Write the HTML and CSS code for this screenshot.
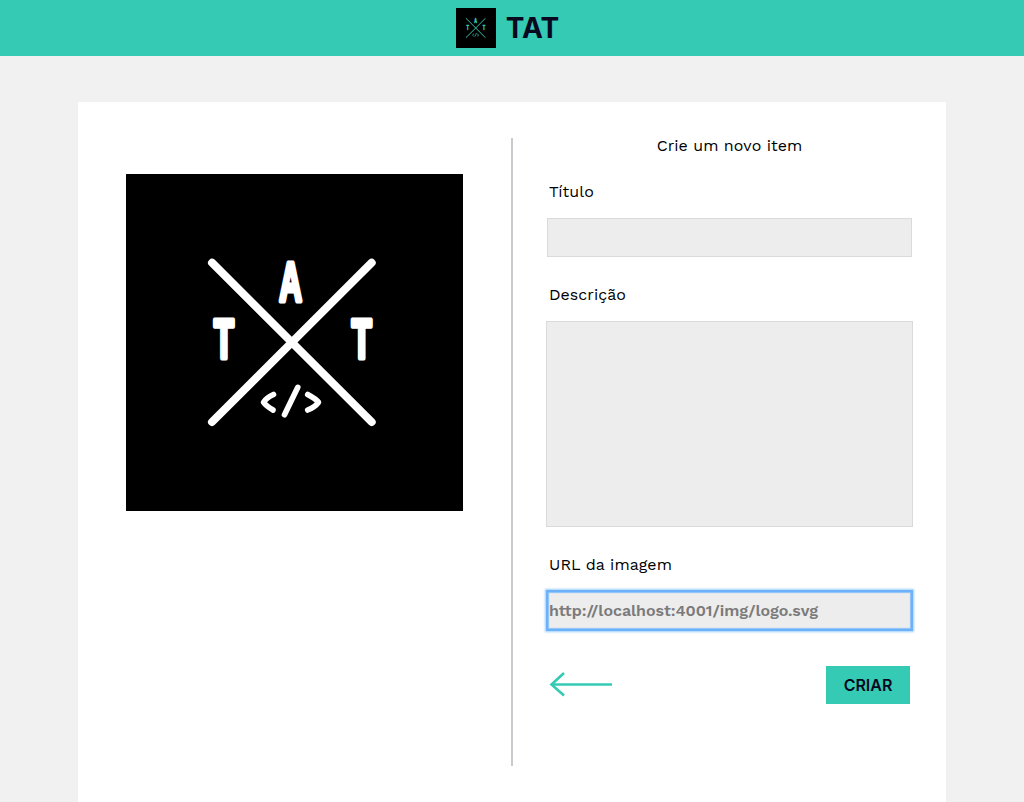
FILE: index.html
```
<!DOCTYPE html>
<html lang="pt">
<head>
<meta charset="utf-8">
<title>TAT</title>
<link rel="stylesheet" href="styles.css">
</head>
<body>
<header class="topbar">
  <svg class="logo topbar-logo" viewBox="0 0 337 337">
    <path class="logo-cross" d="M86 88.7 245.7 248M245.7 88.7 86 248"/>
    <path class="logo-code" d="M147.5 220.5Q140 224 137.5 228.3 140 232 147 236M181.7 220.5Q190 225 192.5 228.3 189 233 181.7 236M171.8 213.3 158.5 240.8"/>
    <g class="logo-letters">
      <text transform="translate(164.5 127.3) scale(.57 1)">A</text>
      <text transform="translate(97.8 184) scale(.59 1)">T</text>
      <text transform="translate(235.6 184) scale(.59 1)">T</text>
    </g>
  </svg>
  <span class="brand">TAT</span>
</header>
<main class="card">
  <section class="preview">
    <svg class="logo preview-image" viewBox="0 0 337 337">
      <path class="logo-cross" d="M86 88.7 245.7 248M245.7 88.7 86 248"/>
      <path class="logo-code" d="M147.5 220.5Q140 224 137.5 228.3 140 232 147 236M181.7 220.5Q190 225 192.5 228.3 189 233 181.7 236M171.8 213.3 158.5 240.8"/>
      <g class="logo-letters">
        <text transform="translate(164.5 127.3) scale(.57 1)">A</text>
        <text transform="translate(97.8 184) scale(.59 1)">T</text>
        <text transform="translate(235.6 184) scale(.59 1)">T</text>
      </g>
    </svg>
  </section>
  <form class="form">
    <h1 class="title">Crie um novo item</h1>
    <label class="label" for="titulo">Título</label>
    <input class="field" id="titulo" type="text">
    <label class="label" for="descricao">Descrição</label>
    <textarea class="field area" id="descricao"></textarea>
    <label class="label" for="url">URL da imagem</label>
    <input class="field focused" id="url" type="text" placeholder="http://localhost:4001/img/logo.svg">
    <div class="actions">
      <svg class="back" viewBox="0 0 64 26"><path d="M16 2 3.5 13.5 16 24.5"/><path d="M3.5 13.5H64"/></svg>
      <button class="create" type="button">CRIAR</button>
    </div>
  </form>
</main>
</body>
</html>
```
FILE: styles.css
```
* { box-sizing: border-box; }
body {
  margin: 0;
  height: 802px;
  background: #f1f1f1;
  color: #000;
  font: 400 16px/20px "Work Sans", Inter, sans-serif;
}
.logo { display: block; background: #000; }
.logo path { fill: none; stroke: currentColor; stroke-linecap: round; stroke-linejoin: round; }
.logo .logo-cross { stroke-width: 8px; }
.logo .logo-code { stroke-width: 5.6px; }
.logo-letters {
  fill: currentColor;
  stroke: currentColor;
  text-anchor: middle;
  font: 700 55px "Liberation Sans", sans-serif;
  stroke-width: 5px;
  stroke-linejoin: round;
}
.topbar {
  height: 56px;
  display: flex;
  align-items: center;
  justify-content: center;
  gap: 10px;
  padding-right: 9px;
  background: #35cab4;
}
.topbar-logo { width: 40px; height: 40px; color: #35cab4; }
.brand { font: 700 28px/40px Inter, sans-serif; color: #080820; }
.card {
  width: 868px;
  height: 700px;
  margin: 46px auto 0;
  padding: 36px 33px 0 48px;
  display: flex;
  background: #fff;
}
.preview {
  width: 387px;
  height: 628px;
  padding-top: 36px;
  border-right: 2px solid #cacace;
}
.preview-image { width: 337px; height: 337px; color: #fff; }
.form { width: 367px; margin-left: 33px; display: flex; flex-direction: column; }
.title { margin: -2px 0 26px; font-size: 16px; font-weight: 400; line-height: 20px; text-align: center; }
.label { height: 20px; margin: 0 3px 16px; letter-spacing: .05px; }
.field {
  display: block;
  height: 39px;
  margin: 0 1px 28px;
  padding: 0 2px;
  border: 1px solid #dadada;
  border-radius: 0;
  outline: 0;
  background: #ededed;
  font: 600 16px "Work Sans", Inter, sans-serif;
}
.area { height: 206px; margin: 0 0 28px; resize: none; }
.focused {
  margin-bottom: 36px;
  padding-left: 1px;
  border-color: #6cb2fa;
  box-shadow: 0 0 0 1px #6cb2fa, 0 0 2px 2px #9fcdfb, inset 0 0 1px 1px #8ac0fa;
}
.focused::placeholder { color: #7b7b7b; opacity: 1; letter-spacing: -.05px; }
.actions { display: flex; justify-content: space-between; padding: 0 3px 0 2px; }
.back { width: 64px; height: 26px; margin-top: 5px; fill: none; stroke: #35cab4; stroke-width: 2.6; }
.create {
  width: 84px;
  height: 38px;
  padding: 0;
  border: 0;
  background: #35cab4;
  color: #080820;
  font: 600 16px Inter, sans-serif;
}
```
